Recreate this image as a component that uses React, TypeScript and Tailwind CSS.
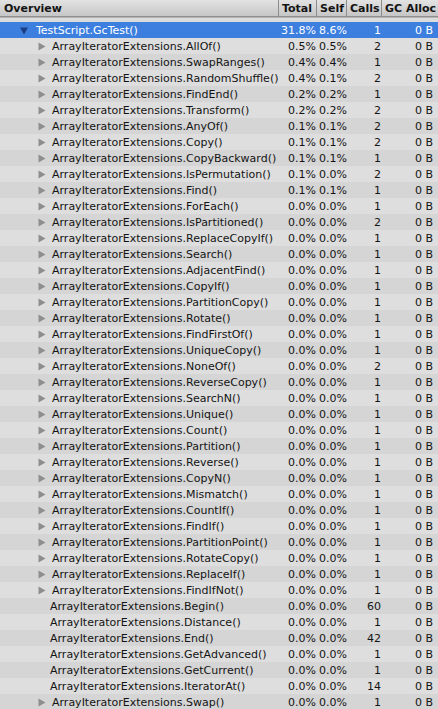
import React from 'react'

type Row = {
  name: string
  total: string
  self: string
  calls: string
  kids?: boolean
}

const rows: Row[] = [
  { name: 'AllOf', total: '0.5%', self: '0.5%', calls: '2', kids: true },
  { name: 'SwapRanges', total: '0.4%', self: '0.4%', calls: '1', kids: true },
  { name: 'RandomShuffle', total: '0.4%', self: '0.1%', calls: '2', kids: true },
  { name: 'FindEnd', total: '0.2%', self: '0.2%', calls: '1', kids: true },
  { name: 'Transform', total: '0.2%', self: '0.2%', calls: '2', kids: true },
  { name: 'AnyOf', total: '0.1%', self: '0.1%', calls: '2', kids: true },
  { name: 'Copy', total: '0.1%', self: '0.1%', calls: '2', kids: true },
  { name: 'CopyBackward', total: '0.1%', self: '0.1%', calls: '1', kids: true },
  { name: 'IsPermutation', total: '0.1%', self: '0.0%', calls: '2', kids: true },
  { name: 'Find', total: '0.1%', self: '0.1%', calls: '1', kids: true },
  { name: 'ForEach', total: '0.0%', self: '0.0%', calls: '1', kids: true },
  { name: 'IsPartitioned', total: '0.0%', self: '0.0%', calls: '2', kids: true },
  { name: 'ReplaceCopyIf', total: '0.0%', self: '0.0%', calls: '1', kids: true },
  { name: 'Search', total: '0.0%', self: '0.0%', calls: '1', kids: true },
  { name: 'AdjacentFind', total: '0.0%', self: '0.0%', calls: '1', kids: true },
  { name: 'CopyIf', total: '0.0%', self: '0.0%', calls: '1', kids: true },
  { name: 'PartitionCopy', total: '0.0%', self: '0.0%', calls: '1', kids: true },
  { name: 'Rotate', total: '0.0%', self: '0.0%', calls: '1', kids: true },
  { name: 'FindFirstOf', total: '0.0%', self: '0.0%', calls: '1', kids: true },
  { name: 'UniqueCopy', total: '0.0%', self: '0.0%', calls: '1', kids: true },
  { name: 'NoneOf', total: '0.0%', self: '0.0%', calls: '2', kids: true },
  { name: 'ReverseCopy', total: '0.0%', self: '0.0%', calls: '1', kids: true },
  { name: 'SearchN', total: '0.0%', self: '0.0%', calls: '1', kids: true },
  { name: 'Unique', total: '0.0%', self: '0.0%', calls: '1', kids: true },
  { name: 'Count', total: '0.0%', self: '0.0%', calls: '1', kids: true },
  { name: 'Partition', total: '0.0%', self: '0.0%', calls: '1', kids: true },
  { name: 'Reverse', total: '0.0%', self: '0.0%', calls: '1', kids: true },
  { name: 'CopyN', total: '0.0%', self: '0.0%', calls: '1', kids: true },
  { name: 'Mismatch', total: '0.0%', self: '0.0%', calls: '1', kids: true },
  { name: 'CountIf', total: '0.0%', self: '0.0%', calls: '1', kids: true },
  { name: 'FindIf', total: '0.0%', self: '0.0%', calls: '1', kids: true },
  { name: 'PartitionPoint', total: '0.0%', self: '0.0%', calls: '1', kids: true },
  { name: 'RotateCopy', total: '0.0%', self: '0.0%', calls: '1', kids: true },
  { name: 'ReplaceIf', total: '0.0%', self: '0.0%', calls: '1', kids: true },
  { name: 'FindIfNot', total: '0.0%', self: '0.0%', calls: '1', kids: true },
  { name: 'Begin', total: '0.0%', self: '0.0%', calls: '60' },
  { name: 'Distance', total: '0.0%', self: '0.0%', calls: '1' },
  { name: 'End', total: '0.0%', self: '0.0%', calls: '42' },
  { name: 'GetAdvanced', total: '0.0%', self: '0.0%', calls: '1' },
  { name: 'GetCurrent', total: '0.0%', self: '0.0%', calls: '1' },
  { name: 'IteratorAt', total: '0.0%', self: '0.0%', calls: '14' },
  { name: 'Swap', total: '0.0%', self: '0.0%', calls: '1', kids: true },
]

function Arrow({ down, className }: { down?: boolean; className: string }) {
  return (
    <svg width="8" height="9" viewBox="0 0 8 9" className={className}>
      {down ? <path d="M0 1.5 L8 1.5 L4 8.5 Z" fill="currentColor" /> : <path d="M0.5 0.5 L7.5 4.5 L0.5 8.5 Z" fill="currentColor" />}
    </svg>
  )
}

function HeaderCell({ label, className }: { label: string; className: string }) {
  return (
    <div className={`flex h-full items-center whitespace-nowrap border-l border-[#8c8c8c] pl-[3px] font-bold ${className}`}>
      {label}
    </div>
  )
}

export default function App() {
  return (
    <div
      className="h-[709px] w-[438px] overflow-hidden bg-[#d8d8d8] text-[11px] leading-none text-[#141414]"
      style={{ fontFamily: '"DejaVu Sans", "Noto Sans", sans-serif' }}
    >
      <div className="flex h-[17px] border-b border-[#8e8e8e] bg-gradient-to-b from-[#e3e3e3] to-[#c6c6c6]">
        <div className="flex flex-1 items-center pl-[4px] font-bold">Overview</div>
        <HeaderCell label="Total" className="w-[38px] shrink-0" />
        <HeaderCell label="Self" className="w-[30px] shrink-0" />
        <HeaderCell label="Calls" className="w-[35px] shrink-0" />
        <HeaderCell label="GC Alloc" className="w-[57px] shrink-0" />
      </div>
      <div className="h-[5px] border-t border-[#b4b4b4] bg-[#dcdcdc]" />
      <div className="flex h-[16px] items-center bg-[#3d7fdf] text-white">
        <div className="flex flex-1 items-center pl-[20px]">
          <Arrow down className="mr-[8px] text-[#1b3f86]" />
          <span>TestScript.GcTest()</span>
        </div>
        <div className="w-[35px] text-right">31.8%</div>
        <div className="w-[31px] pl-[3px]">8.6%</div>
        <div className="w-[34px] text-right">1</div>
        <div className="w-[57px] pr-[5px] text-right">0 B</div>
      </div>
      {rows.map((r, i) => (
        <div
          key={r.name}
          className={`flex h-[16px] items-center ${i % 2 === 0 ? 'bg-[#dedede]' : 'bg-[#d5d5d5]'}`}
        >
          <div className={`flex min-w-0 flex-1 items-center whitespace-nowrap ${r.kids ? 'pl-[38px]' : 'pl-[50px]'}`}>
            {r.kids ? <Arrow className="mr-[6px] shrink-0 text-[#8e8e8e]" /> : null}
            <span>ArrayIteratorExtensions.{r.name}()</span>
          </div>
          <div className="w-[35px] shrink-0 text-right">{r.total}</div>
          <div className="w-[31px] shrink-0 pl-[3px]">{r.self}</div>
          <div className="w-[34px] shrink-0 text-right">{r.calls}</div>
          <div className="w-[57px] shrink-0 pr-[5px] text-right">0 B</div>
        </div>
      ))}
    </div>
  )
}
